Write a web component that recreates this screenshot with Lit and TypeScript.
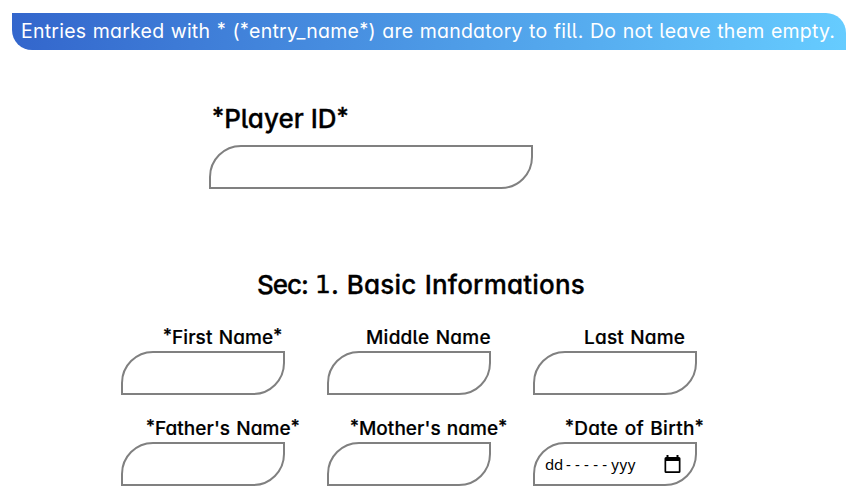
import { LitElement, html, css } from "lit";
import { customElement, property } from "lit/decorators.js";
import { styleMap } from "lit/directives/style-map.js";

interface Field {
  label: string;
  indent: number;
  spacing: number;
  type: "text" | "date";
}

const FIELDS: Field[] = [
  { label: "*First Name*", indent: 42, spacing: 0.1, type: "text" },
  { label: "Middle Name", indent: 39, spacing: 0.25, type: "text" },
  { label: "Last Name", indent: 51, spacing: 0.2, type: "text" },
  { label: "*Father's Name*", indent: 25, spacing: 0.05, type: "text" },
  { label: "*Mother's name*", indent: 23, spacing: 0.05, type: "text" },
  { label: "*Date of Birth*", indent: 32, spacing: 0.3, type: "date" },
];

const glyphs = css`
  .star {
    font-family: Lato, sans-serif;
    font-weight: 900;
    font-size: 1.1em;
    line-height: 0;
  }
  .one {
    font-family: "DejaVu Sans", sans-serif;
    font-weight: 400;
    font-size: 25px;
    -webkit-text-stroke: 0.4px currentColor;
  }
`;

// Sets the mandatory markers in a smaller, heavier asterisk.
const marked = (text: string) =>
  text.split(/(\*)/).map((part) => (part === "*" ? html`<span class="star">*</span>` : part));

@customElement("form-field")
class FormField extends LitElement {
  @property() label = "";
  @property() type = "text";
  @property({ type: Number }) indent = 0;
  @property({ type: Number }) spacing = 0;

  static styles = [
    glyphs,
    css`
    :host { display: block; }
    .label {
      display: block;
      height: 28px;
      line-height: 29px;
      font-size: 19px;
      font-weight: 500;
      -webkit-text-stroke: 0.2px currentColor;
      white-space: nowrap;
      word-spacing: 1px;
    }
    .box {
      box-sizing: border-box;
      width: 164px;
      height: 44px;
      border: 2px solid #808080;
      border-radius: 32px 0 32px 0;
      background: #fff;
      display: flex;
      align-items: center;
      justify-content: space-between;
      padding: 0 14px 0 10px;
    }
    .date {
      display: flex;
      width: 92px;
      font: 15px/20px "Noto Sans", sans-serif;
      white-space: nowrap;
    }
    .day { letter-spacing: -0.2px; }
    .dashes { letter-spacing: 4.2px; padding-left: 3px; }
    .year { letter-spacing: 0.6px; }
    .icon { width: 17px; height: 19px; display: block; }
  `,
  ];

  render() {
    const offset = styleMap({
      marginLeft: `${this.indent}px`,
      letterSpacing: `${this.spacing}px`,
    });
    return html`
      <span class="label" style=${offset}>${marked(this.label)}</span>
      <div class="box">
        ${this.type === "date"
          ? html`<span class="date"><span class="day">dd</span><span class="dashes">-----</span><span class="year">yyy</span></span>
              <svg class="icon" viewBox="0 0 17 19">
                <path fill="#000" fill-rule="evenodd" d="M2.5 0h2v2h8V0h2v2h.5a1.5 1.5 0 0 1 1.5 1.5v13A1.5 1.5 0 0 1 15 18H2a1.5 1.5 0 0 1-1.5-1.5v-13A1.5 1.5 0 0 1 2 2h.5zM2.2 6v10.3h12.6v-10.3z"/>
              </svg>`
          : null}
      </div>
    `;
  }
}

@customElement("app-root")
class AppRoot extends LitElement {
  static styles = [
    glyphs,
    css`
    :host {
      display: flow-root;
      height: 502px;
      overflow: hidden;
      background: #fff;
      color: #000;
      font-family: Inter, "Noto Sans", sans-serif;
      font-feature-settings: "cv11", "cv05";
    }
    .notice {
      box-sizing: border-box;
      margin: 13px 8px 0 12px;
      height: 37px;
      line-height: 37px;
      padding-left: 9px;
      border-radius: 0 20px 0 20px;
      background: linear-gradient(90deg, #3366cc, #66ccff);
      color: #fff;
      font-size: 19.5px;
      letter-spacing: 0.23px;
      word-spacing: 0.7px;
      white-space: nowrap;
    }
    .notice .star { font-weight: 700; }
    .player { margin: 49px 0 0 209px; }
    .player-label {
      display: block;
      height: 46px;
      line-height: 40px;
      margin-left: 3px;
      font-size: 26px;
      font-weight: 500;
      -webkit-text-stroke: 0.3px currentColor;
    }
    .player-box {
      box-sizing: border-box;
      width: 324px;
      height: 44px;
      border: 2px solid #808080;
      border-radius: 32px 0 32px 0;
    }
    .title {
      display: flex;
      margin: 76px 0 0 257px;
      height: 40px;
      line-height: 40px;
      font-size: 26px;
      font-weight: 500;
      -webkit-text-stroke: 0.3px currentColor;
      white-space: nowrap;
    }
    .title .sec { letter-spacing: -1px; }
    .title .one { margin-left: 7px; }
    .title .rest { word-spacing: 1px; letter-spacing: 0.2px; }
    .grid {
      display: grid;
      grid-template-columns: repeat(3, 164px);
      column-gap: 42px;
      row-gap: 19px;
      margin: 18px 0 0 121px;
    }
  `,
  ];

  render() {
    return html`
      <div class="notice">${marked("Entries marked with * (*entry_name*) are mandatory to fill. Do not leave them empty.")}</div>
      <section class="player">
        <span class="player-label">${marked("*Player ID*")}</span>
        <div class="player-box"></div>
      </section>
      <div class="title"><span class="sec">Sec:</span><span class="one">1</span><span class="rest">. Basic Informations</span></div>
      <div class="grid">
        ${FIELDS.map(
          (f) => html`<form-field .label=${f.label} .type=${f.type} .indent=${f.indent} .spacing=${f.spacing}></form-field>`
        )}
      </div>
    `;
  }
}
